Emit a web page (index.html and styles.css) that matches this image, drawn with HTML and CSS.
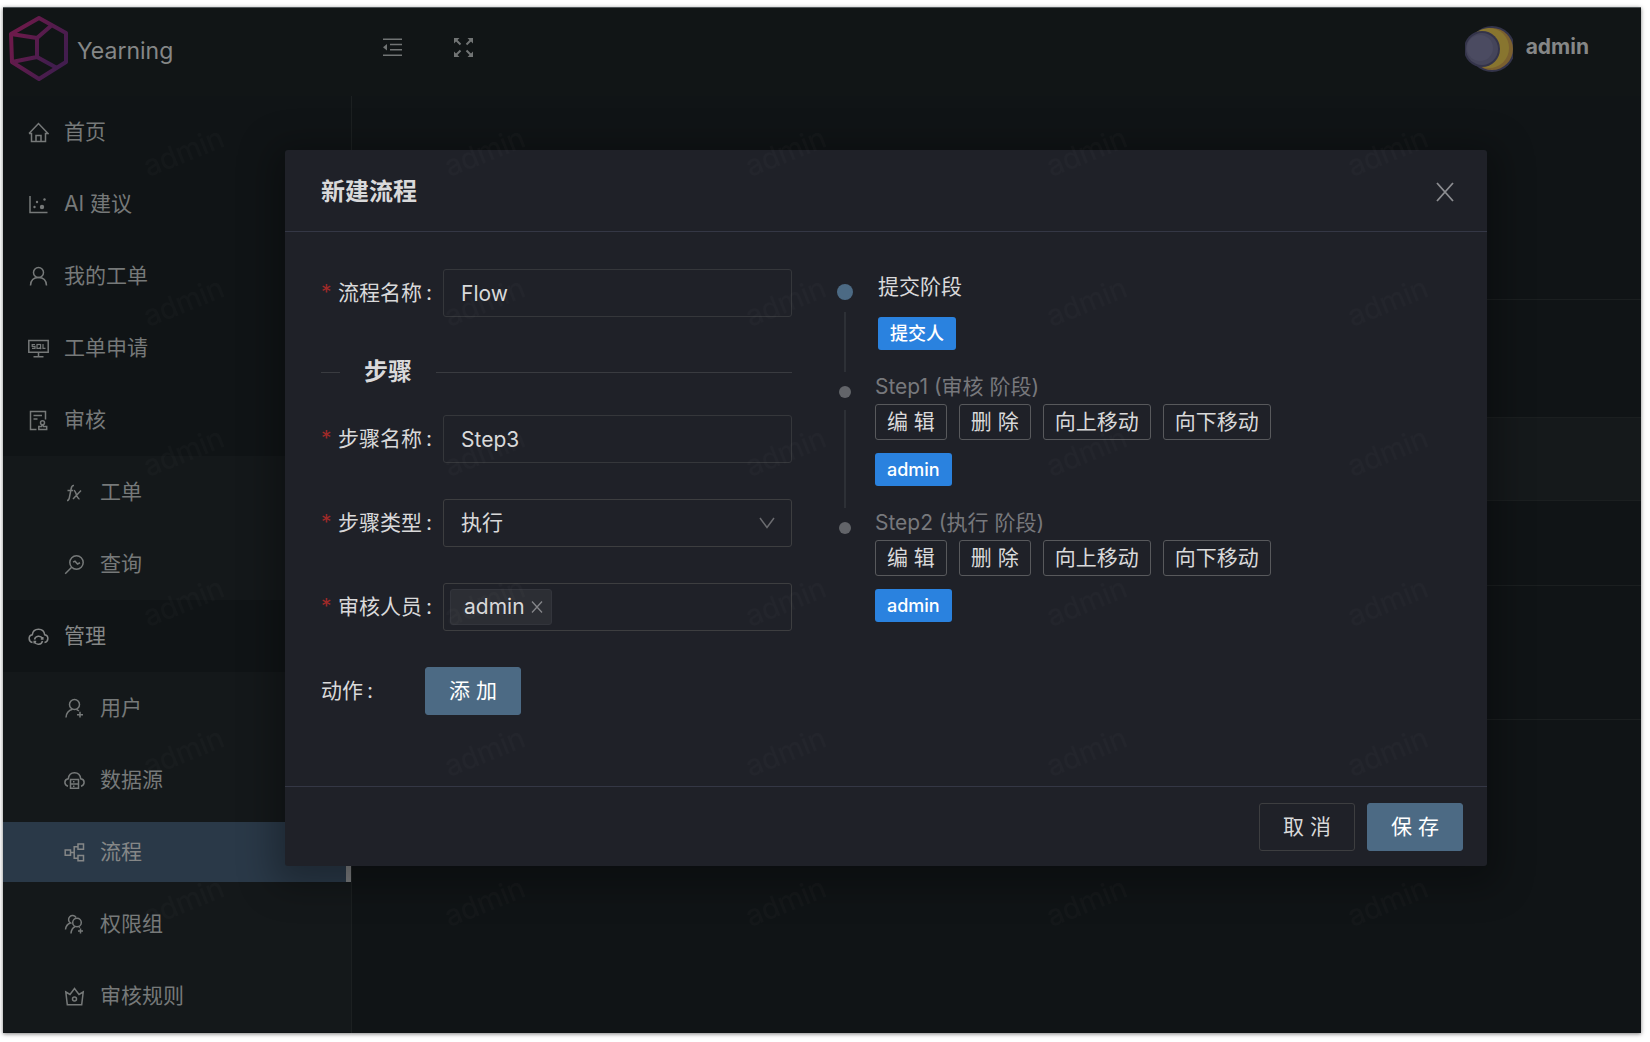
FILE: index.html
```html
<!DOCTYPE html>
<html lang="zh-CN">
<head>
    <meta charset="UTF-8">
    <title>Yearning</title>
    <link rel="stylesheet" href="styles.css">
</head>
<body>
<div class="app">
    <header class="header">
        <a href="#" class="logo">
            <svg width="62" height="66" viewBox="0 0 62 66" fill="none" stroke="url(#logoColor)" stroke-width="4" stroke-linejoin="round">
                <defs>
                    <linearGradient id="logoColor" x1="0" y1="0" x2="1" y2="0.6">
                        <stop offset="0.2" stop-color="#6b1a4a"/>
                        <stop offset="1" stop-color="#421d4e"/>
                    </linearGradient>
                </defs>
                <path d="M31 3L58 18V47L31 64L4 47L3 19Z"/>
                <path d="M3 19L29 23L44 10M29 23V42L4 47M29 42L49 53"/>
            </svg>
            <span>Yearning</span>
        </a>
        <div class="tools">
            <button type="button" class="tool" aria-label="收起菜单">
                <svg width="21" height="21" viewBox="0 0 21 21" fill="none" stroke="currentColor" stroke-width="1.6">
                    <path d="M1 2.2H20M8 7.5H20M8 12.8H20M1 18.2H20"/>
                    <path d="M5 7V13.4L1 10.2Z" fill="currentColor" stroke="none"/>
                </svg>
            </button>
            <button type="button" class="tool" aria-label="全屏">
                <svg width="21" height="21" viewBox="0 0 21 21" fill="none" stroke="currentColor" stroke-width="2">
                    <path d="M2 2L7.5 7.5M19 2L13.5 7.5M2 19L7.5 13.5M19 19L13.5 13.5"/>
                    <path d="M1 1H6.5L1 6.5ZM20 1V6.5L14.5 1ZM1 20V14.5L6.5 20ZM20 20H14.5L20 14.5Z" fill="currentColor" stroke="none"/>
                </svg>
            </button>
        </div>
        <a href="#" class="account">
            <svg width="48" height="46" viewBox="0 0 48 46">
                <circle cx="27" cy="23" r="23" fill="#34344a"/>
                <circle cx="27" cy="23" r="21" fill="#7b602f"/>
                <circle cx="24" cy="22" r="20" fill="#88752f"/>
                <circle cx="17" cy="23" r="18" fill="#34344a"/>
                <circle cx="17" cy="23" r="16" fill="#45455a"/>
                <circle cx="15" cy="22" r="13" fill="#4b4b61"/>
            </svg>
            <strong>admin</strong>
        </a>
    </header>

    <div class="main">
        <nav class="sider">
            <ul class="menu">
                <li><a href="#">
                    <svg class="icon" viewBox="0 0 21 21"><path d="M1 11.5L10.5 1.5L20 11.5H17.5V19.5H3.5V11.5H1M8 19.5V13.5H13V19.5"/></svg>
                    首页</a></li>
                <li><a href="#">
                    <svg class="icon" viewBox="0 0 21 21"><path d="M2 2V18.5H19.5"/><g fill="currentColor" stroke="none"><circle cx="14" cy="13" r="2.2"/><circle cx="6.5" cy="13" r="1.2"/><circle cx="9" cy="8" r="1.2"/><circle cx="16.5" cy="5.5" r="1.2"/></g></svg>
                    AI 建议</a></li>
                <li><a href="#">
                    <svg class="icon" viewBox="0 0 21 21"><circle cx="10.5" cy="6.5" r="5"/><path d="M2.5 19.5C2.7 14.5 5.5 11.5 10.5 11.5S18.3 14.5 18.5 19.5"/></svg>
                    我的工单</a></li>
                <li><a href="#">
                    <svg class="icon" viewBox="0 0 21 21"><path d="M0.8 2.5H20.2V14.2H0.8ZM10.5 14.2V18.5M5.5 18.7H15.5"/><g stroke-width="1.2"><path d="M7 6.5H4.2V8.3H7V10.4H4M15 6V10.4H17.5"/><rect x="9" y="6.5" width="3.6" height="3.9"/><path d="M11.5 9.5L13 11"/></g></svg>
                    工单申请</a></li>
                <li><a href="#">
                    <svg class="icon" viewBox="0 0 21 21"><path d="M8.5 19.5H2.5V1.5H17.5V9.5M5.5 5.5H14M5.5 9H9.5"/><circle cx="14.5" cy="12.7" r="2"/><path d="M14 14.7L13.5 16.5H10.8V19.5H18.7V16.5H15.5L15 14.7"/></svg>
                    审核</a>
                    <ul class="submenu">
                        <li><a href="#">
                            <svg class="icon" viewBox="0 0 21 21"><path d="M3 18.5C4.5 18.5 5 17.5 5.3 16L7.2 6.5C7.6 4.2 8.3 3.3 10 3.5M3.5 8.5H9.3M10 8.5C12 8.5 12.5 17 15.5 17M17 8.5L9 17"/></svg>
                            工单</a></li>
                        <li><a href="#">
                            <svg class="icon" viewBox="0 0 21 21"><circle cx="12.5" cy="8.5" r="6.7"/><path d="M7.7 13.3L1.2 19.8M9 8.2L11 7.2L13.5 10L16 8.8"/></svg>
                            查询</a></li>
                    </ul>
                </li>
                <li class="open"><a href="#">
                    <svg class="icon" viewBox="0 0 21 21"><path d="M4.5 16.5C0.3 15.5 -0.2 9.8 4.3 8.8C5.2 1.3 15.8 1.3 16.7 8.8C21.2 9.8 20.7 15.5 16.5 16.5"/><path d="M6.5 13.5A4.3 4.3 0 0 1 14.5 12.5M14.5 15A4.3 4.3 0 0 1 6.5 16M14.8 11V13H12.8M6.2 17.5V15.5H8.2"/></svg>
                    管理</a>
                    <ul class="submenu">
                        <li><a href="#">
                            <svg class="icon" viewBox="0 0 21 21"><circle cx="10.5" cy="6.5" r="5"/><path d="M2 19.5C2.2 15 4.5 12.5 8.5 11.3M12.5 11.3L15 13M16 13.8V19.5M13 16.7H19"/></svg>
                            用户</a></li>
                        <li><a href="#">
                            <svg class="icon" viewBox="0 0 21 21"><path d="M4 16.2C-0.2 15 -0.2 9.5 4.3 8.8C5.2 0.8 15.8 0.8 16.7 8.8C21.2 9.5 21.2 15 17 16.2"/><path d="M6.5 9.5H14.5V18.3H6.5ZM6.5 14H14.5M9 11.8H10.5M9 16.2H10.5"/></svg>
                            数据源</a></li>
                        <li class="active"><a href="#">
                            <svg class="icon" viewBox="0 0 21 21"><path d="M1.2 8H6.5V13.3H1.2ZM14 2H19.5V7.3H14ZM14 13.5H19.5V18.8H14ZM6.5 10.6H10.2M14 4.7H10.2V16.2H14"/></svg>
                            流程</a></li>
                        <li><a href="#">
                            <svg class="icon" viewBox="0 0 21 21"><circle cx="13" cy="8.5" r="4.3"/><path d="M7 19.5C7.2 16 8.5 13.8 11.2 12.5M14.5 12.5L16 13.5M16.5 14.5V19.5M14 17H19M12 3.5A4 4 0 1 0 6.5 9C3.5 10 1.8 12.5 1.5 15.5"/></svg>
                            权限组</a></li>
                        <li><a href="#">
                            <svg class="icon" viewBox="0 0 21 21"><path d="M1.8 6L6 8.5L10.5 2.5L15 8.5L19.2 6L17.7 18.7H3.3Z"/><circle cx="10.5" cy="13" r="2"/></svg>
                            审核规则</a></li>
                    </ul>
                </li>
            </ul>
        </nav>
        <main class="content">
            <div class="toolbar"></div>
            <div class="row filter"></div>
            <div class="row thead"></div>
            <div class="row"></div>
            <div class="row tall"></div>
        </main>
    </div>

    <div class="mask">
        <section class="modal" role="dialog" aria-labelledby="modalTitle">
            <div class="modal-header">
                <h2 id="modalTitle">新建流程</h2>
                <button type="button" class="close" aria-label="关闭">
                    <svg width="18" height="20" viewBox="0 0 18 20" fill="none" stroke="currentColor" stroke-width="1.8"><path d="M1 1L17 19M17 1L1 19"/></svg>
                </button>
            </div>
            <div class="modal-body">
                <form class="form">
                    <div class="form-item">
                        <label for="flowName" class="required">流程名称</label>
                        <input type="text" id="flowName" class="control" value="Flow">
                    </div>
                    <h3 class="divider">步骤</h3>
                    <div class="form-item">
                        <label for="stepName" class="required">步骤名称</label>
                        <input type="text" id="stepName" class="control" value="Step3">
                    </div>
                    <div class="form-item">
                        <label for="stepType" class="required">步骤类型</label>
                        <div class="select">
                            <select id="stepType" class="control">
                                <option>执行</option>
                                <option>审核</option>
                            </select>
                            <svg width="16" height="12" viewBox="0 0 16 12" fill="none" stroke="currentColor" stroke-width="1.5"><path d="M1 1L8 10.5L15 1"/></svg>
                        </div>
                    </div>
                    <div class="form-item">
                        <label for="auditor" class="required">审核人员</label>
                        <div class="control multiple">
                            <span class="picked">admin
                                <button type="button" aria-label="移除 admin">
                                    <svg width="12" height="12" viewBox="0 0 12 12" fill="none" stroke="currentColor" stroke-width="1.3"><path d="M1 0.5L11 11.5M11 0.5L1 11.5"/></svg>
                                </button>
                            </span>
                            <input type="text" id="auditor">
                        </div>
                    </div>
                    <div class="form-item">
                        <label for="addStep" class="action">动作</label>
                        <button type="button" id="addStep" class="btn primary">添 加</button>
                    </div>
                </form>

                <ol class="steps">
                    <li class="current">
                        <div class="rail"><i></i></div>
                        <div class="step">
                            <h4>提交阶段</h4>
                            <span class="tag">提交人</span>
                        </div>
                    </li>
                    <li>
                        <div class="rail"><i></i></div>
                        <div class="step">
                            <h4>Step1 (审核 阶段)</h4>
                            <div class="ops">
                                <button type="button">编 辑</button>
                                <button type="button">删 除</button>
                                <button type="button">向上移动</button>
                                <button type="button">向下移动</button>
                            </div>
                            <span class="tag">admin</span>
                        </div>
                    </li>
                    <li>
                        <div class="rail"><i></i></div>
                        <div class="step">
                            <h4>Step2 (执行 阶段)</h4>
                            <div class="ops">
                                <button type="button">编 辑</button>
                                <button type="button">删 除</button>
                                <button type="button">向上移动</button>
                                <button type="button">向下移动</button>
                            </div>
                            <span class="tag">admin</span>
                        </div>
                    </li>
                </ol>
            </div>
            <div class="modal-footer">
                <button type="button" class="btn">取 消</button>
                <button type="button" class="btn primary">保 存</button>
            </div>
        </section>
    </div>

    <!-- 水印 -->
    <svg class="watermark" aria-hidden="true">
        <defs>
            <pattern id="mark" width="301" height="150" patternUnits="userSpaceOnUse" patternTransform="translate(30 70)">
                <text x="151" y="84" text-anchor="middle" transform="rotate(-22 151 75)">admin</text>
            </pattern>
        </defs>
        <rect y="100" width="100%" height="820" fill="url(#mark)"/>
    </svg>
</div>
</body>
</html>
```
FILE: styles.css
```css
body,h2,h3,h4,ul,ol,li{margin:0;padding:0}
*{box-sizing:border-box}
body,button,input,select{font:21px/1.5 Inter, "Noto Sans CJK SC", sans-serif;color:#d9d9da;}
body{
    background:#fff;
    padding:7px 9px 9px 3px;
}
ol,ul{list-style:none}
a{text-decoration:none;color:inherit}
button{
    padding:0;
    border:0;
    background:none;
    cursor:pointer;
    white-space:nowrap;
}
.app{
    position:relative;
    display:flex;
    flex-direction:column;
    height:calc(100vh - 16px);
    min-height:900px;
    overflow:hidden;
    background:#101416;
    border-top:1px solid #50575a;
    box-shadow:0 1px 4px rgba(0,0,0,.5);
}

/* 顶部 */
.header{
    display:flex;
    align-items:center;
    flex:none;
    height:88px;
    padding:0 52px 10px 5px;
    background:#111516;
    color:#858787;
}
.logo{
    display:flex;
    align-items:center;
    gap:7px;
    width:374px;
    padding-top:2px;
    font-size:23px;
}
.logo span{
    padding-top:6px;
}
.tools{
    display:flex;
    gap:50px;
}
.tool{
    display:flex;
    color:#717474;
}
.account{
    display:flex;
    align-items:center;
    gap:13px;
    margin-left:auto;
}
.account svg{
    margin-top:4px;
}

/* 菜单 */
.main{
    display:flex;
    flex:1;
    min-height:0;
}
.sider{
    flex:none;
    width:349px;
    border-right:1px solid #1c2021;
    overflow:hidden;
    color:#767979;
}
.menu a{
    display:flex;
    align-items:center;
    gap:15px;
    height:60px;
    margin:6px 0;
    padding-left:25px;
}
.menu li{
    display:flow-root;
}
.open > a{
    color:#858787;
}
.submenu{
    display:flow-root;
    background:#14181a;
}
.submenu a{
    padding-left:61px;
}
.submenu .active a{
    background:#2a3948;
    border-right:5px solid #7b7d7f;
    color:#858787;
}
.icon{
    flex:none;
    width:21px;
    height:21px;
    fill:none;
    stroke:currentColor;
    stroke-width:1.5;
}

/* 列表 */
.content{
    flex:1;
}
.toolbar{
    height:203px;
}
.row{
    height:85px;
    border-top:1px solid #1b1f20;
}
.row.filter{
    height:118px;
}
.row.thead{
    height:83px;
    background:#15191b;
}
.row.tall{
    height:135px;
    border-bottom:1px solid #1b1f20;
}

/* 弹窗 */
.mask{
    position:absolute;
    top:0;
    right:0;
    bottom:0;
    left:0;
    padding:142px 154px 0 282px;
}
.modal{
    background:#1f2128;
    border-radius:3px;
    box-shadow:0 8px 36px 12px rgba(0,0,0,.3);
}
.modal-header{
    display:flex;
    align-items:center;
    justify-content:space-between;
    height:82px;
    padding:2px 33px 0 36px;
    border-bottom:1px solid #343745;
}
.modal-header h2{
    font-size:24px;
    font-weight:600;
}
.close{
    display:flex;
    color:#8c8d91;
}
.modal-body{
    display:grid;
    grid-template-columns:10fr 1fr 13fr;
    padding:37px 36px 35px;
}
.form{
    min-width:0;
}
.form-item{
    display:flex;
    align-items:center;
    height:48px;
    margin-bottom:36px;
}
.form-item label{
    flex:none;
    width:122px;
}
.form-item label.action{
    width:104px;
}
.form-item label:after{
    content:":";
    margin-left:4px;
}
.required:before{
    content:"*";
    display:inline-block;
    width:17px;
    color:#a02a28;
}
.control{
    flex:1;
    width:100%;
    min-width:0;
    height:48px;
    padding:0 17px;
    background:transparent;
    border:1px solid #35373b;
    border-radius:3px;
    outline:none;
}
.select{
    position:relative;
    flex:1;
}
.select .control{
    display:block;
    appearance:none;
    border-color:#3d3e40;
}
.select svg{
    position:absolute;
    right:17px;
    top:18px;
    color:#6b6c70;
    pointer-events:none;
}
.multiple{
    display:flex;
    align-items:center;
    padding:0 6px;
    border-color:#3d3e40;
}
.multiple input{
    flex:1;
    min-width:0;
    border:0;
    background:none;
    outline:none;
}
.picked{
    display:flex;
    align-items:center;
    gap:6px;
    height:36px;
    padding:0 8px 0 13px;
    background:#2c2e34;
    border:1px solid #33353c;
    border-radius:3px;
}
.picked button{
    display:flex;
    color:#85868a;
}
.divider{
    display:flex;
    align-items:center;
    gap:24px;
    height:38px;
    margin-bottom:24px;
    font-size:24px;
    font-weight:600;
}
.divider:before,.divider:after{
    content:"";
    width:19px;
    border-top:1px solid #393b40;
}
.divider:after{
    flex:1;
}
.btn{
    width:96px;
    height:48px;
    border:1px solid #3d3e40;
    border-radius:3px;
}
.btn.primary{
    background:#4c6a84;
    border-color:#4c6a84;
    color:#fff;
}

/* 步骤 */
.steps{
    grid-column:3;
    padding-top:1px;
}
.steps li{
    display:flex;
    gap:24px;
}
.rail{
    display:flex;
    flex-direction:column;
    align-items:center;
    width:12px;
    margin-bottom:-2px;
    padding-top:16px;
}
.rail i{
    flex:none;
    width:12px;
    height:12px;
    margin-bottom:12px;
    border-radius:50%;
    background:#626469;
}
.rail:after{
    content:"";
    flex:1;
    border-left:2px solid #2d3036;
}
.steps li:last-child .rail:after{
    display:none;
}
.current .rail{
    padding-top:14px;
}
.current .rail i{
    width:16px;
    height:16px;
    background:#4c6a84;
}
.step{
    padding-bottom:20px;
}
.current .step{
    padding-left:3px;
}
.step h4{
    height:34px;
    line-height:34px;
    font-size:21px;
    font-weight:400;
    color:#77787c;
}
.current h4{
    color:#d9d9da;
}
.ops{
    display:flex;
    gap:12px;
}
.ops button{
    height:36px;
    padding:0 11px;
    line-height:34px;
    border:1px solid #58595c;
    border-radius:3px;
}
.tag{
    display:table;
    margin-top:13px;
    padding:0 12px;
    border-radius:3px;
    background:#2a82df;
    color:#fff;
    font-size:18px;
    font-weight:500;
    line-height:33px;
}
.modal-footer{
    display:flex;
    justify-content:flex-end;
    gap:12px;
    padding:16px 24px 15px;
    border-top:1px solid #343745;
}

.watermark{
    position:absolute;
    top:0;
    left:0;
    width:100%;
    height:100%;
    pointer-events:none;
}
.watermark text{
    font:400 29px Inter, sans-serif;
    fill:rgba(150,150,150,.03);
}
```
